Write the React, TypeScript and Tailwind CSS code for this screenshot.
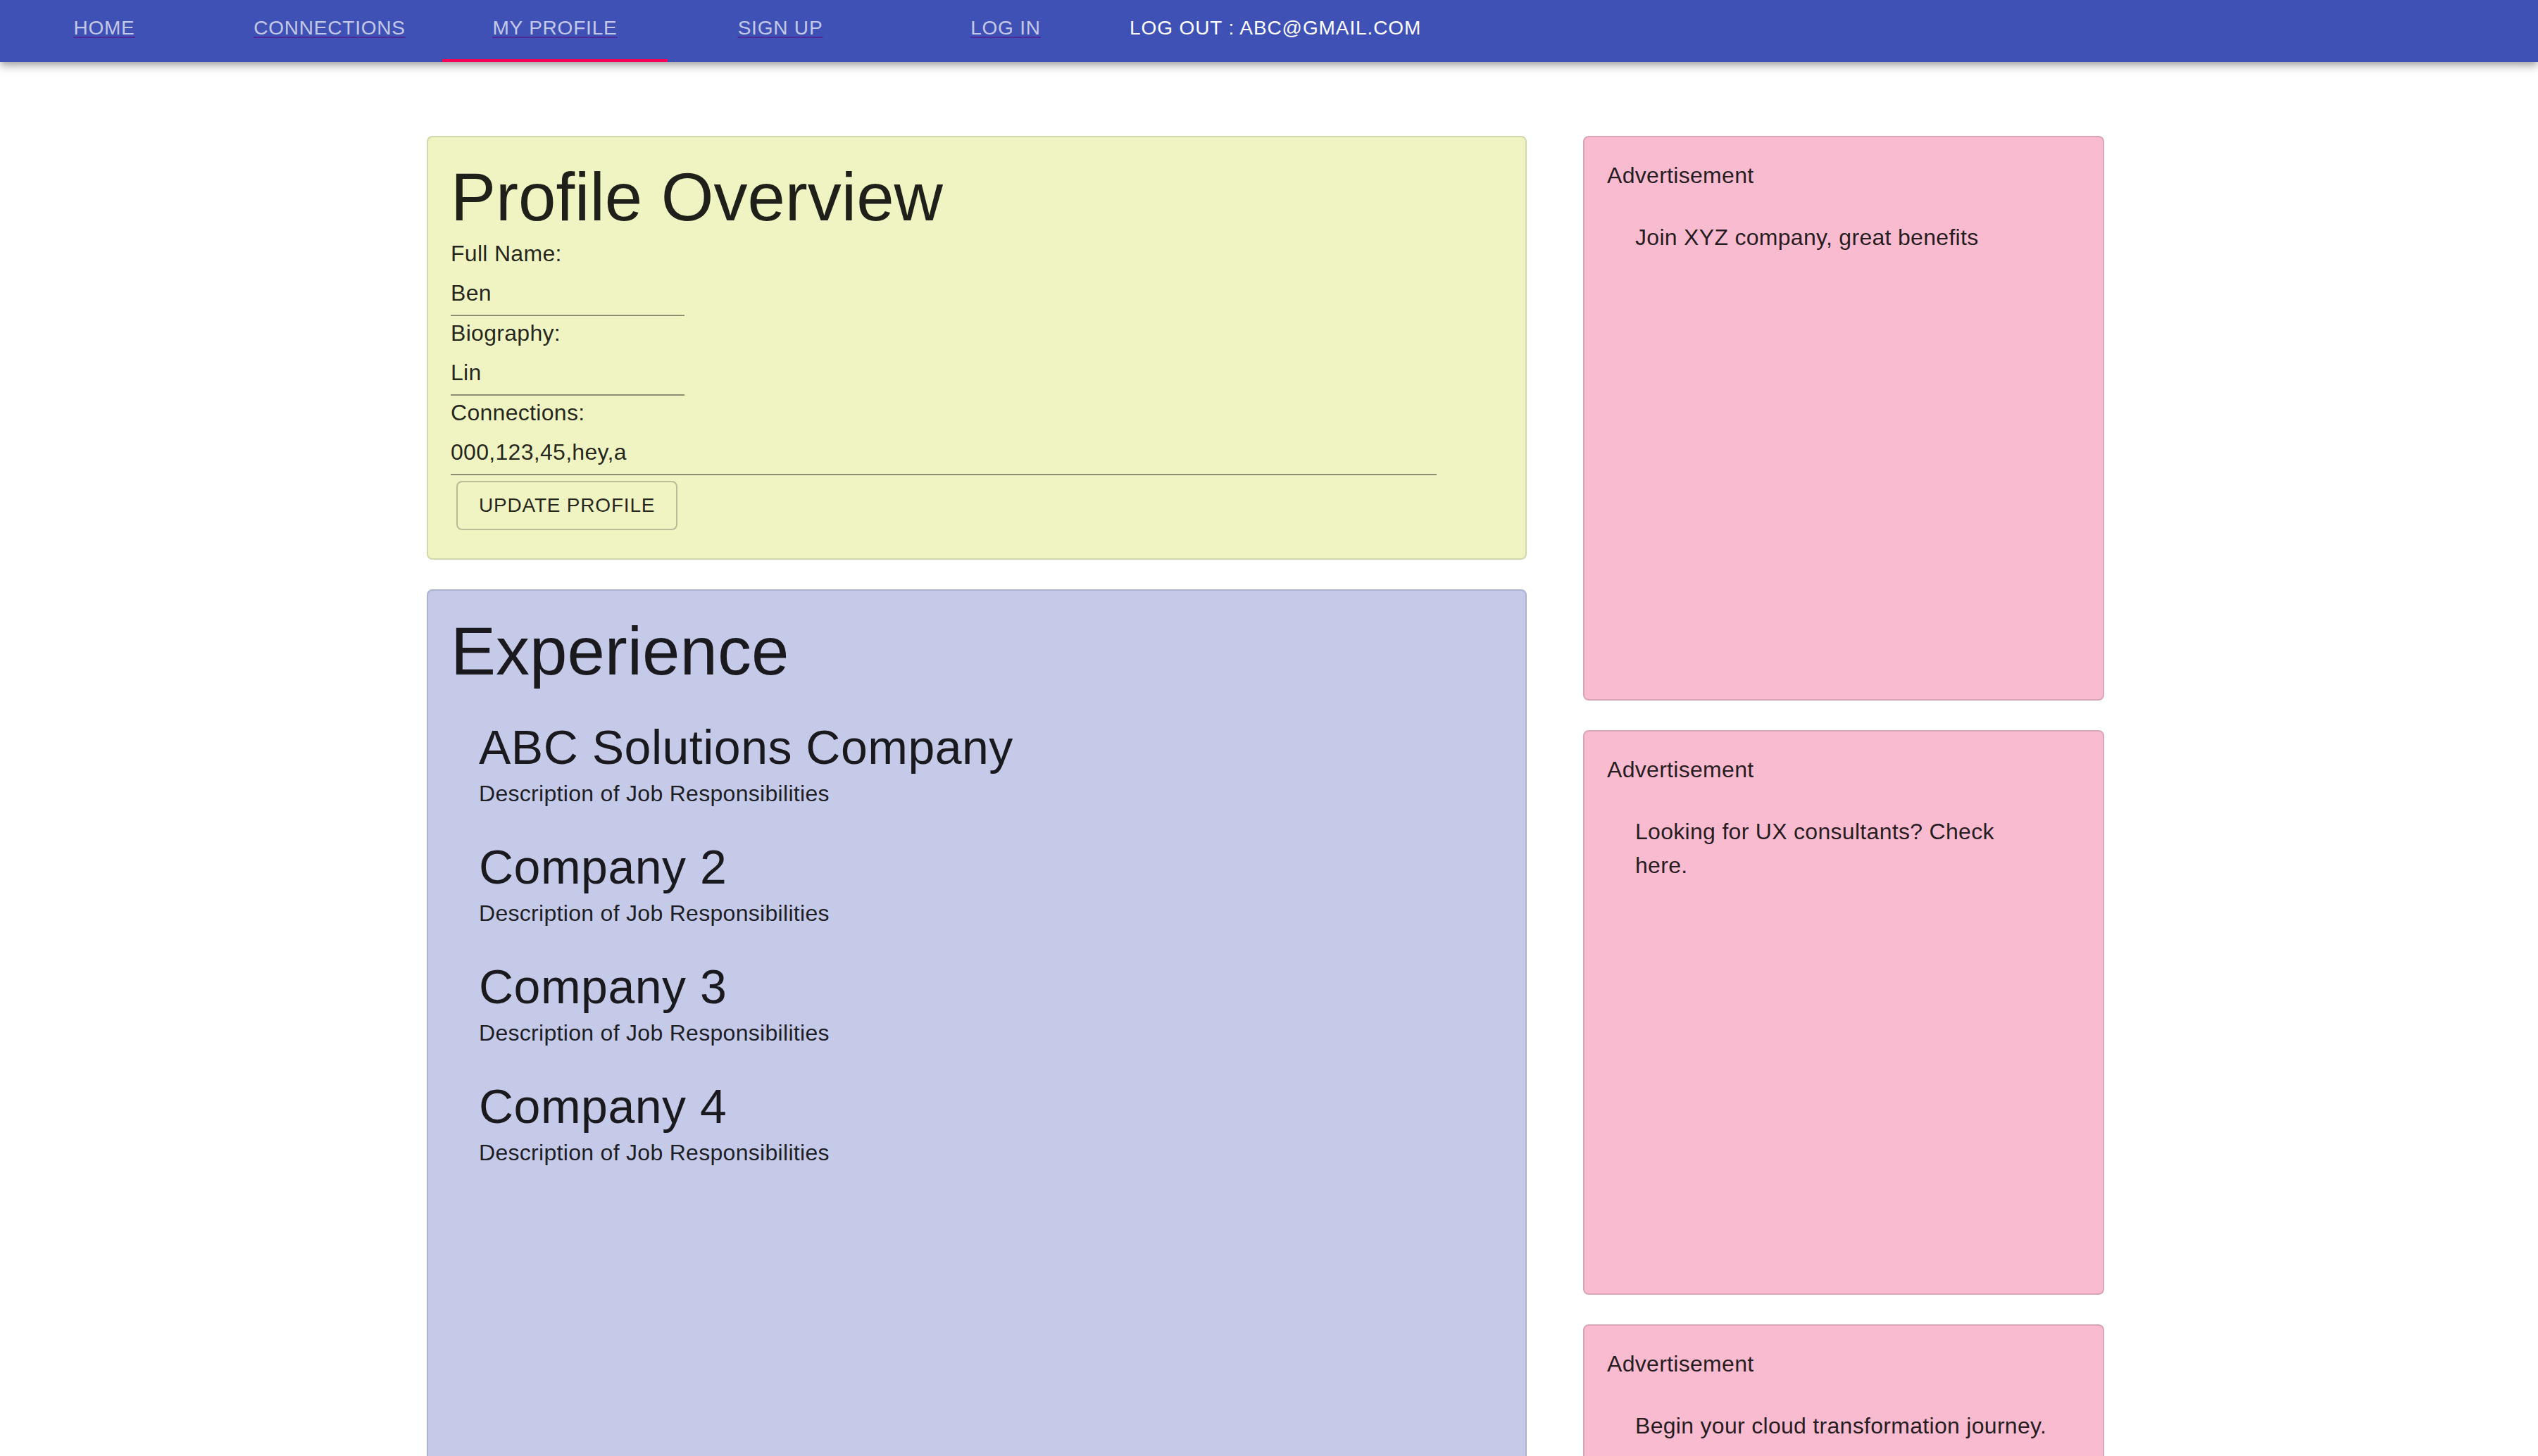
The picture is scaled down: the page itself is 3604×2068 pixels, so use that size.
import React from 'react'

const tabs = ['HOME', 'CONNECTIONS', 'MY PROFILE', 'SIGN UP', 'LOG IN']

const fields = [
  { label: 'Full Name:', value: 'Ben', width: 'w-[332px]' },
  { label: 'Biography:', value: 'Lin', width: 'w-[332px]' },
  { label: 'Connections:', value: '000,123,45,hey,a', width: 'w-[1400px]' },
]

const jobs = ['ABC Solutions Company', 'Company 2', 'Company 3', 'Company 4']

const ads = [
  'Join XYZ company, great benefits',
  'Looking for UX consultants? Check here.',
  'Begin your cloud transformation journey.',
]

function NavBar() {
  return (
    <nav className="relative z-10 flex h-[88px] bg-[#3f51b5] shadow-[0_4px_8px_-2px_rgba(0,0,0,0.2),0_8px_10px_0_rgba(0,0,0,0.14),0_2px_20px_0_rgba(0,0,0,0.12)]">
      <div className="ml-[-12px] flex">
        {tabs.map((tab, i) => (
          <a key={tab} className="relative h-[88px] w-[320px] pt-[24px] text-center text-[28px] leading-[32px] tracking-[0.8px] text-white/70">
            <span className="underline decoration-[#4e2a98] decoration-2 underline-offset-[3px]">{tab}</span>
            {i === 2 && <span className="absolute bottom-0 left-0 h-[4px] w-full bg-[#f50057]" />}
          </a>
        ))}
      </div>
      <span className="pl-[16px] pt-[24px] text-[28px] leading-[32px] tracking-[0.9px] text-white">
        LOG OUT : ABC@GMAIL.COM
      </span>
    </nav>
  )
}

function ProfileCard() {
  return (
    <section className="rounded-[8px] border-2 border-[#d3d7ac] bg-[#f0f4c3] pl-[32px] pr-[30px] pt-[29px] pb-[32px]">
      <h1 className="text-[96px] leading-[112px]">Profile Overview</h1>
      {fields.map((f) => (
        <div key={f.label}>
          <div className="text-[32px] leading-[48px] tracking-[0.3px]">{f.label}</div>
          <div className={`${f.width} border-b-2 border-[#8b8e71] pt-[13px] pb-[12px] text-[32px] leading-[38px] tracking-[0.3px]`}>
            {f.value}
          </div>
        </div>
      ))}
      <button className="m-[8px] rounded-[8px] border-2 border-[#b9bc96] px-[30px] py-[10px] text-[28px] leading-[46px] tracking-[0.8px]">
        UPDATE PROFILE
      </button>
    </section>
  )
}

function ExperienceCard() {
  return (
    <section className="h-[1300px] rounded-[8px] border-2 border-[#adb2cd] bg-[#c5cae9] pl-[32px] pr-[30px] pt-[30px]">
      <h1 className="text-[96px] leading-[112px]">Experience</h1>
      <div className="pl-[40px]">
        {jobs.map((job) => (
          <div key={job} className="mt-[38px]">
            <h2 className="text-[68px] leading-[84px] tracking-[0.5px]">{job}</h2>
            <p className="text-[32px] leading-[48px] tracking-[0.3px]">Description of Job Responsibilities</p>
          </div>
        ))}
      </div>
    </section>
  )
}

function AdCard({ text }: { text: string }) {
  return (
    <section className="h-[802px] shrink-0 rounded-[8px] border-2 border-[#daa5b7] bg-[#f8bbd0] px-[32px] pt-[30px]">
      <div className="text-[32px] leading-[48px] tracking-[0.3px]">Advertisement</div>
      <div className="mt-[40px] pl-[40px]">
        <p className="w-[590px] text-[32px] leading-[48px] tracking-[0.3px]">{text}</p>
      </div>
    </section>
  )
}

export default function App() {
  return (
    <div className="h-[2068px] overflow-hidden bg-white font-['Liberation_Sans',Arial,sans-serif] text-[rgba(0,0,0,0.87)]">
      <NavBar />
      <div className="flex gap-[80px] pl-[606px] pt-[105px]">
        <div className="flex w-[1562px] flex-col gap-[42px]">
          <ProfileCard />
          <ExperienceCard />
        </div>
        <div className="flex w-[740px] flex-col gap-[42px]">
          {ads.map((ad) => (
            <AdCard key={ad} text={ad} />
          ))}
        </div>
      </div>
    </div>
  )
}
